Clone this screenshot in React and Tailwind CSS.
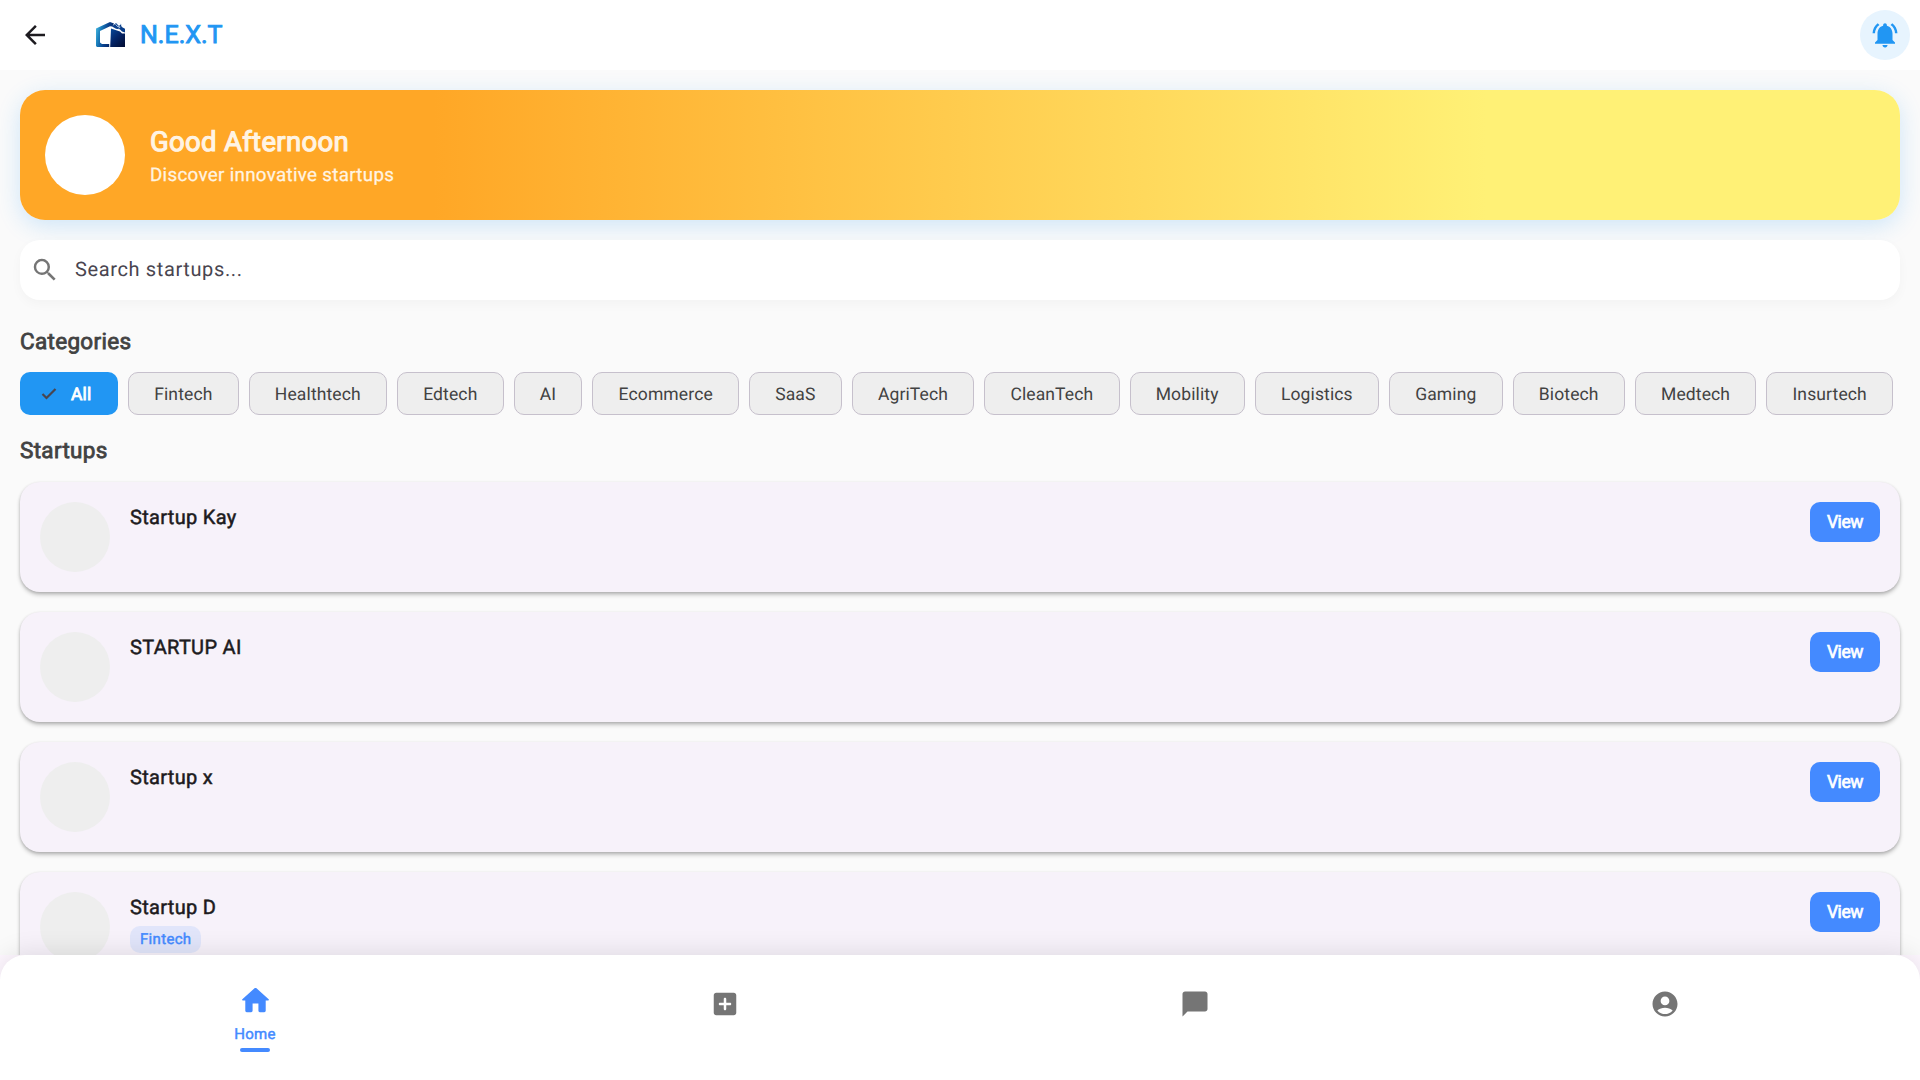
import React from "react";
import { MdArrowBack, MdNotificationsActive, MdSearch, MdChatBubble } from "react-icons/md";

const categories = [
  "Fintech", "Healthtech", "Edtech", "AI", "Ecommerce", "SaaS", "AgriTech", "CleanTech",
  "Mobility", "Logistics", "Gaming", "Biotech", "Medtech", "Insurtech",
];

const startups = [
  { name: "Startup Kay" },
  { name: "STARTUP AI" },
  { name: "Startup x" },
  { name: "Startup D", tag: "Fintech" },
];

function Logo() {
  return (
    <svg viewBox="0 0 30 26" className="w-[30px] h-[26px]">
      <defs>
        <linearGradient id="frame" x1="0" y1="0" x2="1" y2="0.35">
          <stop offset="0" stopColor="#55c4e6" />
          <stop offset="0.3" stopColor="#1d84c0" />
          <stop offset="0.65" stopColor="#0a428f" />
          <stop offset="1" stopColor="#052564" />
        </linearGradient>
        <linearGradient id="door" x1="0" y1="0" x2="0.8" y2="1">
          <stop offset="0" stopColor="#074a9c" />
          <stop offset="0.5" stopColor="#04266a" />
          <stop offset="1" stopColor="#020f38" />
        </linearGradient>
      </defs>
      <path d="M0 6.5 14 0l4 1.6-1.6 3L14 4.2 4 9v11.5L6 22h7.2v3H1l-1-1z" fill="url(#frame)" />
      <path d="M15 6.5 19.5 8l4.5 1.4 2 2.1h3V25H14.2z" fill="url(#door)" />
      <path d="M16 4.4 20 1l3 3 2-2 1.2 3.2 2.8 1.6V10.4l-3-.8-2.2-2.4-3.8-.4z" fill="#083d8a" />
      <path d="M19.3 2.2 22 4.8l1.6-.4M20.6.8l4 .4L26 4.8M22.5 6.2l1.8-1" stroke="#e9f3fb" strokeWidth="0.8" fill="none" />
    </svg>
  );
}

function HomeIcon() {
  return (
    <svg viewBox="0 0 24 24" fill="currentColor" className="size-[35px]">
      <path d="M10 19v-5h4v5c0 .55.45 1 1 1h3c.55 0 1-.45 1-1v-7h1.7c.46 0 .68-.57.33-.87L12.67 3.6c-.38-.34-.96-.34-1.34 0l-8.36 7.53c-.34.3-.13.87.33.87H5v7c0 .55.45 1 1 1h3c.55 0 1-.45 1-1z" />
    </svg>
  );
}

function AddIcon() {
  return (
    <svg viewBox="0 0 24 24" fill="currentColor" className="size-[30px]">
      <path d="M19 3H5c-1.11 0-2 .9-2 2v14c0 1.1.89 2 2 2h14c1.1 0 2-.9 2-2V5c0-1.1-.9-2-2-2zm-3 10h-3v3c0 .55-.45 1-1 1s-1-.45-1-1v-3H8c-.55 0-1-.45-1-1s.45-1 1-1h3V8c0-.55.45-1 1-1s1 .45 1 1v3h3c.55 0 1 .45 1 1s-.45 1-1 1z" />
    </svg>
  );
}

function AccountIcon() {
  return (
    <svg viewBox="0 0 24 24" fill="currentColor" className="size-[30px]">
      <path d="M12 2C6.48 2 2 6.48 2 12s4.48 10 10 10 10-4.48 10-10S17.52 2 12 2zm0 4c1.93 0 3.5 1.57 3.5 3.5S13.93 13 12 13s-3.5-1.57-3.5-3.5S10.07 6 12 6zm0 14c-2.03 0-4.43-.82-6.14-2.88C7.55 15.8 9.68 15 12 15s4.45.8 6.14 2.12C16.43 19.18 14.03 20 12 20z" />
    </svg>
  );
}

function Header() {
  return (
    <header className="flex h-[70px] shrink-0 items-center bg-white pl-5 pr-2.5">
      <MdArrowBack className="size-[30px] text-[#1d1b20]" />
      <div className="ml-[46px] flex items-center">
        <Logo />
        <span className="ml-[14px] pt-px text-[25px] leading-[34px] text-[#2196f3] [-webkit-text-stroke:0.9px]">
          N.E.X.T
        </span>
      </div>
      <div className="ml-auto flex size-[50px] items-center justify-center rounded-full bg-[#e7f4fe] text-[#2196f3]">
        <MdNotificationsActive className="size-[30px]" />
      </div>
    </header>
  );
}

function Banner() {
  return (
    <section className="flex h-[130px] shrink-0 items-center rounded-[25px] bg-[linear-gradient(90deg,#ffa726_22%,#fff176_78%)] px-[25px] shadow-[0_6px_23px_rgba(33,150,243,0.2)]">
      <div className="size-20 rounded-full bg-white" />
      <div className="ml-[25px] flex flex-col gap-[6px]">
        <h1 className="text-[27.5px] leading-[33px] tracking-[0.3125px] text-[#fff4e4] [-webkit-text-stroke:1.1px]">Good Afternoon</h1>
        <p className="text-[18.75px] leading-[22px] tracking-[0.3125px] text-[#fff4e2] [-webkit-text-stroke:0.25px]">Discover innovative startups</p>
      </div>
    </section>
  );
}

function SectionTitle({ children }) {
  return (
    <h2 className="pt-px text-[22.5px] leading-[27px] tracking-[0.3125px] text-[#424242] [-webkit-text-stroke:0.8px]">{children}</h2>
  );
}

function StartupCard({ name, tag }) {
  return (
    <article className="flex h-[110px] shrink-0 items-start rounded-[20px] bg-[#f7f2fa] p-5 shadow-[0_1px_3px_rgba(0,0,0,0.16),0_3px_4px_rgba(0,0,0,0.2)]">
      <div className="size-[70px] rounded-full bg-[#eeeeee]" />
      <div className="ml-5 flex flex-col items-start pt-[2px]">
        <h3 className="text-[20px] leading-[27px] tracking-[0.3125px] text-[#1d1b20] [-webkit-text-stroke:0.5px]">{name}</h3>
        {tag && (
          <span className="mt-[5px] rounded-[10px] bg-[#448aff]/12 px-2.5 pt-px text-[15px] leading-[25.5px] tracking-[0.3125px] text-[#448aff] [-webkit-text-stroke:0.45px]">
            {tag}
          </span>
        )}
      </div>
      <button className="ml-auto h-10 w-[70px] rounded-[10px] bg-[#448aff] text-[17.5px] leading-10 tracking-[-0.4px] text-white [-webkit-text-stroke:0.7px]">
        View
      </button>
    </article>
  );
}

function BottomNav() {
  return (
    <div className="absolute inset-x-0 bottom-0 h-[125px] bg-[#fef7ff]">
      <nav className="grid h-full grid-cols-4 rounded-t-[25px] bg-white px-5 text-[#757575] shadow-[0_-2px_26px_rgba(0,0,0,0.1)]">
        <div className="flex flex-col items-center pt-7 text-[#448aff]">
          <HomeIcon />
          <span className="mt-[7px] text-[15px] leading-[18px] tracking-[0.3125px] [-webkit-text-stroke:0.45px]">Home</span>
          <span className="mt-[5.25px] h-[3.75px] w-[30px] rounded-full bg-[#448aff]" />
        </div>
        <div className="flex justify-center pt-[34px]"><AddIcon /></div>
        <div className="flex justify-center pt-[34px]"><MdChatBubble className="size-[30px]" /></div>
        <div className="flex justify-center pt-[34px]"><AccountIcon /></div>
      </nav>
    </div>
  );
}

export default function App() {
  return (
    <div className="relative flex h-[1080px] w-[1920px] flex-col overflow-hidden bg-[#fafafa] font-['Roboto',sans-serif] [text-rendering:geometricPrecision]">
      <Header />
      <main className="flex flex-col px-5 pt-5">
        <Banner />
        <div className="mt-5 flex h-[60px] shrink-0 items-center rounded-[20px] bg-white pl-2.5 shadow-[0_4px_12px_rgba(0,0,0,0.03)]">
          <MdSearch className="size-[30px] text-[#757575]" />
          <span className="ml-[15px] pb-[2px] text-[20px] tracking-[0.625px] text-[#49454f]">Search startups...</span>
        </div>
        <div className="mt-7"><SectionTitle>Categories</SectionTitle></div>
        <div className="mt-4 flex gap-2.5 text-[17.5px] leading-[26px] tracking-[0.125px] whitespace-nowrap">
          <div className="flex h-[43px] w-[98px] shrink-0 items-center rounded-[10px] bg-[#2196f3] pl-[21px] text-white">
            <svg viewBox="0 0 16 12" className="w-4 h-3" fill="none" stroke="#49454f" strokeWidth="2.2">
              <path d="M1.5 6 5.5 10 14.5 1" />
            </svg>
            <span className="ml-[14px] pt-[2px] [-webkit-text-stroke:0.8px]">All</span>
          </div>
          {categories.map((c) => (
            <div key={c} className="flex h-[43px] shrink-0 items-center rounded-[10px] border-[1.25px] border-[#c6c0cc] bg-[#eeeeee] px-[25.2px] pt-[2px] text-[#424242]">
              {c}
            </div>
          ))}
        </div>
        <div className="mt-[22px]"><SectionTitle>Startups</SectionTitle></div>
        <div className="mt-[17px] flex flex-col gap-5">
          {startups.map((s) => <StartupCard key={s.name} {...s} />)}
        </div>
      </main>
      <BottomNav />
    </div>
  );
}
